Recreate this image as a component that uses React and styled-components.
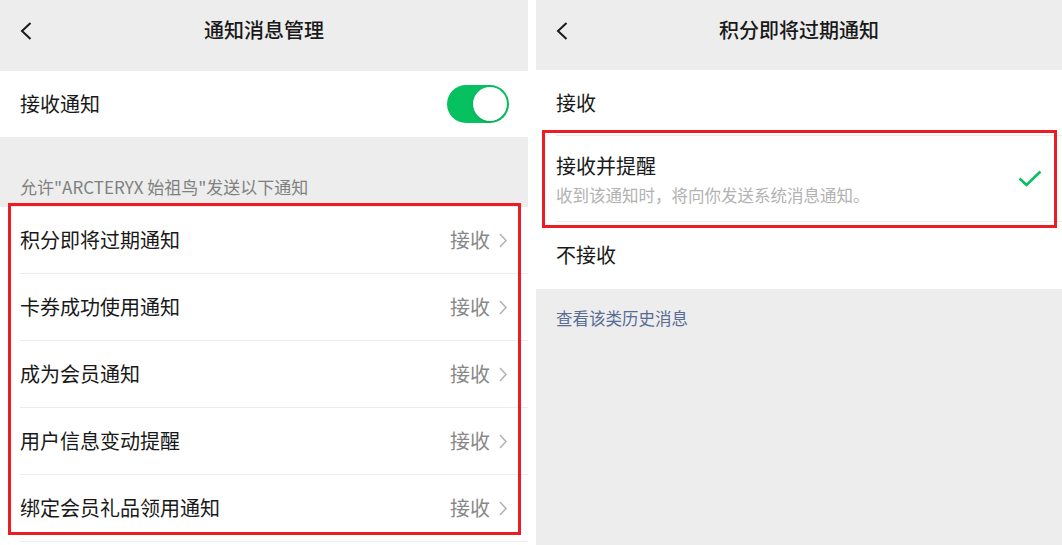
import React from "react"
import styled, { createGlobalStyle } from "styled-components"

const GlobalStyle = createGlobalStyle`
  html, body {
    margin: 0;
    padding: 0;
    background: #fff;
  }
  body {
    font-family: "Noto Sans CJK SC", "Noto Sans", sans-serif;
    color: #191919;
  }
`

const Screen = styled.div`
  display: flex;
  gap: 8px;
  width: 1062px;
  height: 545px;
  overflow: hidden;
  background: #fff;
`

const Panel = styled.div`
  display: flex;
  flex-direction: column;
  width: ${(p) => p.$width || "auto"};
  flex: ${(p) => (p.$width ? "none" : "1")};
  background: ${(p) => (p.$gray ? "#ededed" : "#fff")};
`

const NavBar = styled.div`
  display: grid;
  grid-template-columns: 60px 1fr 60px;
  grid-template-rows: 60px;
  align-items: center;
  padding-bottom: ${(p) => p.$gap}px;
  background: #ededed;
`

const BackButton = styled.div`
  display: flex;
  align-items: center;
  padding-left: 20px;
  padding-top: 2px;
`

const Title = styled.div`
  text-align: center;
  font-size: 20px;
  font-weight: 500;
  line-height: 28px;
  color: #191919;
`

const Group = styled.div`
  position: relative;
  background: #fff;
`

const Row = styled.div`
  padding-left: 20px;
  background: #fff;
`

const RowInner = styled.div`
  display: flex;
  align-items: center;
  justify-content: space-between;
  min-height: ${(p) => p.$height}px;
  padding-right: ${(p) => p.$pr ?? 20}px;
  border-bottom: 1px solid ${(p) => (p.$noLine ? "transparent" : "#ececec")};
  box-sizing: border-box;
`

const Label = styled.div`
  font-size: 20px;
  line-height: 28px;
  color: #191919;
`

const Option = styled.div`
  display: flex;
  flex-direction: column;
  padding: 16px 0 15px;
`

const SubText = styled.div`
  font-size: 16.5px;
  line-height: 22px;
  margin-top: 4px;
  color: #b2b2b2;
`

const Value = styled.div`
  display: flex;
  align-items: center;
  gap: 9px;
  font-size: 20px;
  line-height: 28px;
  color: #888;
`

const Switch = styled.div`
  display: flex;
  justify-content: flex-end;
  align-items: center;
  width: 62px;
  height: 38px;
  padding: 2px;
  box-sizing: border-box;
  border-radius: 19px;
  background: #07c160;
`

const Knob = styled.div`
  width: 34px;
  height: 34px;
  border-radius: 50%;
  background: #fff;
  box-shadow: 0 1px 3px rgba(0, 0, 0, 0.15);
`

const SectionTip = styled.div`
  padding: 39px 20px 9px;
  font-size: 17px;
  line-height: 22px;
  color: #808080;
  background: #ededed;
`

const LinkText = styled.div`
  padding: 18px 20px;
  font-size: 16.5px;
  line-height: 22px;
  color: #576b95;
`

const Highlight = styled.div`
  position: absolute;
  top: ${(p) => p.$top}px;
  left: ${(p) => p.$left}px;
  right: ${(p) => p.$right}px;
  bottom: ${(p) => p.$bottom}px;
  border: 3.5px solid #ec1c24;
  pointer-events: none;
`

const BackIcon = () => (
  <svg width="12" height="18" viewBox="0 0 12 18">
    <path d="M10.5 1 L2 9 L10.5 17" fill="none" stroke="#1a1a1a" strokeWidth="2" />
  </svg>
)

const Arrow = () => (
  <svg width="8" height="15" viewBox="0 0 8 15">
    <path d="M1 1 L7 7.5 L1 14" fill="none" stroke="#b2b2b2" strokeWidth="1.5" />
  </svg>
)

const Check = () => (
  <svg width="24" height="17" viewBox="0 0 24 17">
    <path d="M1.5 8.5 L8.5 15 L22.5 1.5" fill="none" stroke="#07c160" strokeWidth="2.6" />
  </svg>
)

const notices = [
  "积分即将过期通知",
  "卡券成功使用通知",
  "成为会员通知",
  "用户信息变动提醒",
  "绑定会员礼品领用通知",
]

export default function App() {
  return (
    <Screen>
      <GlobalStyle />

      <Panel $width="528px">
        <NavBar $gap={11}>
          <BackButton>
            <BackIcon />
          </BackButton>
          <Title>通知消息管理</Title>
          <div />
        </NavBar>

        <Row>
          <RowInner $height={66} $pr={19} $noLine>
            <Label>接收通知</Label>
            <Switch>
              <Knob />
            </Switch>
          </RowInner>
        </Row>

        <SectionTip>允许"ARCTERYX 始祖鸟"发送以下通知</SectionTip>

        <Group>
          {notices.map((name) => (
            <Row key={name}>
              <RowInner $height={67} $pr={21}>
                <Label>{name}</Label>
                <Value>
                  接收
                  <Arrow />
                </Value>
              </RowInner>
            </Row>
          ))}
          <Highlight $top={-4} $left={8} $right={7} $bottom={7} />
        </Group>
      </Panel>

      <Panel $gray>
        <NavBar $gap={10}>
          <BackButton>
            <BackIcon />
          </BackButton>
          <Title>积分即将过期通知</Title>
          <div />
        </NavBar>

        <Group>
          <Row>
            <RowInner $height={66}>
              <Label>接收</Label>
            </RowInner>
          </Row>
          <Group>
            <Row>
              <RowInner $height={86}>
                <Option>
                  <Label>接收并提醒</Label>
                  <SubText>收到该通知时，将向你发送系统消息通知。</SubText>
                </Option>
                <Check />
              </RowInner>
            </Row>
            <Highlight $top={-6} $left={6} $right={5} $bottom={-6} />
          </Group>
          <Row>
            <RowInner $height={67} $noLine>
              <Label>不接收</Label>
            </RowInner>
          </Row>
        </Group>

        <LinkText>查看该类历史消息</LinkText>
      </Panel>
    </Screen>
  )
}
